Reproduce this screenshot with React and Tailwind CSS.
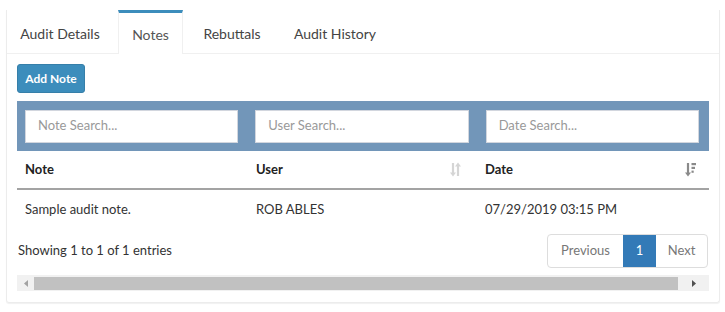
import React from "react";

const tabs = [
  { label: "Audit Details", w: "w-[106px]" },
  { label: "Notes", w: "w-[65px]", active: true },
  { label: "Rebuttals", w: "w-[88px]" },
  { label: "Audit History", w: "w-[108px]" },
];

const SortBoth = () => (
  <svg width="11" height="15" viewBox="0 0 11 15" className="text-[#d5d5d5]">
    <path d="M3 1v11" stroke="currentColor" strokeWidth="2.2" />
    <path d="M0 10.5l3 4 3-4z" fill="currentColor" />
    <path d="M8 14V3.5" stroke="currentColor" strokeWidth="2.2" />
    <path d="M5 4.5L8 0.5l3 4z" fill="currentColor" />
  </svg>
);

const SortDesc = () => (
  <svg width="11" height="15" viewBox="0 0 11 15" className="text-[#8a8a8a]">
    <path d="M3 1v11" stroke="currentColor" strokeWidth="2.2" />
    <path d="M0 10.5l3 4 3-4z" fill="currentColor" />
    <rect x="6.5" y="1" width="4.5" height="2.2" fill="currentColor" />
    <rect x="6.5" y="4.8" width="3.5" height="2.2" fill="currentColor" />
    <rect x="6.5" y="8.6" width="2.2" height="2.2" fill="currentColor" />
  </svg>
);

export default function App() {
  return (
    <div
      className="w-[725px] h-[312px] bg-white pt-[10px] pl-[6px] text-[#333]"
      style={{ fontFamily: "Lato, 'Liberation Sans', sans-serif" }}
    >
      <div className="w-[714px] border border-t-0 border-[#ececec] rounded-b-[3px] shadow-[0_1px_1px_rgba(0,0,0,0.06)]">
        {/* Tabs */}
        <div className="flex h-[44px] border-b border-[#f0f0f0]">
          {tabs.map((t) => (
            <div
              key={t.label}
              className={`${t.w} mr-[5px] flex items-center justify-center text-[14px] ${
                t.active
                  ? "border-t-[3px] border-t-[#3c8dbc] border-x border-x-[#f0f0f0] -mb-px bg-white text-[#555] pt-[1px]"
                  : "text-[#444] pt-[4px]"
              }`}
            >
              {t.label}
            </div>
          ))}
        </div>

        <div className="px-[10px] pt-[10px] pb-[11px]">
          <button className="h-[29px] w-[68px] rounded-[3px] bg-[#3c8dbc] border border-[#367fa9] text-white text-[12px] font-bold">
            Add Note
          </button>

          <div className="mt-[8px] h-[50px] bg-[#7296b9] flex items-center gap-[17px] pl-[8px] pr-[10px]">
            {["Note Search...", "User Search...", "Date Search..."].map((p) => (
              <div
                key={p}
                className="flex-1 h-[33px] bg-white border border-[#d2d6de] flex items-center px-[12px] text-[13px] text-[#999]"
              >
                {p}
              </div>
            ))}
          </div>

          {/* Table */}
          <div className="flex h-[39px] border-b-2 border-[#a3a3a3] text-[13px] font-bold text-[#222]">
            <div className="w-[230px] flex items-center px-[8px]">Note</div>
            <div className="w-[230px] flex items-center justify-between pl-[9px] pr-[16px]">
              <span>User</span>
              <SortBoth />
            </div>
            <div className="flex-1 flex items-center justify-between pl-[8px] pr-[13px]">
              <span>Date</span>
              <SortDesc />
            </div>
          </div>
          <div className="flex h-[39px] text-[13px] text-[#333]">
            <div className="w-[230px] flex items-center px-[8px]">Sample audit note.</div>
            <div className="w-[230px] flex items-center pl-[9px]">ROB ABLES</div>
            <div className="flex-1 flex items-center pl-[8px]">07/29/2019 03:15 PM</div>
          </div>

          <div className="mt-[5px] flex items-center justify-between">
            <span className="text-[13px] text-[#333] pl-[1px]">Showing 1 to 1 of 1 entries</span>
            <div className="flex h-[34px] border border-[#ddd] rounded-[4px] overflow-hidden text-[13px] mr-[1px]">
              <span className="w-[75px] flex items-center justify-center text-[#777]">Previous</span>
              <span className="w-[33px] flex items-center justify-center bg-[#337ab7] text-white">1</span>
              <span className="w-[51px] flex items-center justify-center text-[#777]">Next</span>
            </div>
          </div>

          {/* Scrollbar */}
          <div className="mt-[7px] h-[16px] bg-[#f1f1f1] flex items-center">
            <div className="w-[17px] flex justify-center">
              <svg width="4" height="7" viewBox="0 0 4 7">
                <path d="M4 0v7L0 3.5z" fill="#a3a3a3" />
              </svg>
            </div>
            <div className="w-[644px] h-[13px] bg-[#c1c1c1]" />
            <div className="flex-1 flex justify-center">
              <svg width="4" height="7" viewBox="0 0 4 7">
                <path d="M0 0v7l4-3.5z" fill="#505050" />
              </svg>
            </div>
          </div>
        </div>
      </div>
    </div>
  );
}
